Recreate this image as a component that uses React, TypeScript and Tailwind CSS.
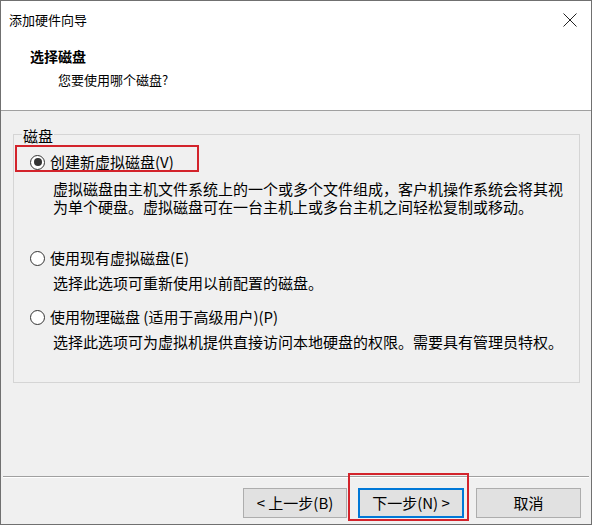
import React from "react";

const FONT = "font-['Noto_Sans_CJK_SC','Noto_Sans',sans-serif]";

const Radio: React.FC<{ checked?: boolean }> = ({ checked }) => (
  <span className="flex h-[15px] w-[15px] shrink-0 items-center justify-center rounded-full border border-[#333333] bg-white">
    {checked && <span className="h-[8px] w-[8px] rounded-full bg-[#333333]" />}
  </span>
);

const Option: React.FC<{
  label: string;
  checked?: boolean;
  highlight?: boolean;
  className?: string;
}> = ({ label, checked, highlight, className }) => (
  <div className={`relative flex h-[20px] items-center gap-[5px] ${className ?? ""}`}>
    <Radio checked={checked} />
    <span className="text-[15px] leading-[20px] text-black whitespace-nowrap">{label}</span>
    {highlight && (
      <span className="pointer-events-none absolute left-[-15px] top-[-7px] h-[27px] w-[184px] border-2 border-[#d3232b]" />
    )}
  </div>
);

const Desc: React.FC<{ lines: string[]; className?: string }> = ({ lines, className }) => (
  <div className={`pl-[23px] text-[15px] text-black whitespace-nowrap ${className ?? ""}`}>
    {lines.map((l) => (
      <div key={l} className="h-[18px] leading-[18px]">
        {l}
      </div>
    ))}
  </div>
);

export default function App() {
  return (
    <div className={`${FONT} flex h-[525px] w-[592px] flex-col border border-[#707070] bg-[#f0f0f0]`}>
      {/* title + header */}
      <div className="h-[110px] shrink-0 border-b border-[#a0a0a0] bg-white">
        <div className="flex h-[38px] items-center justify-between pl-[8px] pr-[14px]">
          <span className="text-[13px] leading-[20px] text-black">添加硬件向导</span>
          <svg width="14" height="14" viewBox="0 0 14 14" className="text-[#222]">
            <path d="M0.5 0.5 L13.5 13.5 M13.5 0.5 L0.5 13.5" stroke="currentColor" strokeWidth="1" fill="none" />
          </svg>
        </div>
        <div className="pt-[7px]">
          <div className="pl-[29px] text-[14px] font-bold leading-[20px] text-black">选择磁盘</div>
          <div className="mt-[4px] pl-[57px] text-[13px] leading-[20px] text-black">您要使用哪个磁盘?</div>
        </div>
      </div>

      {/* body */}
      <div className="flex flex-1 flex-col">
        <div className="pl-[12px] pr-[11px] pt-[23px]">
          {/* group box */}
          <div className="h-[249px] border border-[#d5d5d5]">
            <div className="-mt-[9px] ml-[8px] w-fit bg-[#f0f0f0] px-[1px] text-[15px] leading-[20px] text-black">
              磁盘
            </div>

            <div className="pl-[16px] pt-[6px]">
              <Option label="创建新虚拟磁盘(V)" checked highlight />
              <Desc
                className="mt-[8px]"
                lines={[
                  "虚拟磁盘由主机文件系统上的一个或多个文件组成，客户机操作系统会将其视",
                  "为单个硬盘。虚拟磁盘可在一台主机上或多台主机之间轻松复制或移动。",
                ]}
              />

              <Option label="使用现有虚拟磁盘(E)" className="mt-[32px]" />
              <Desc className="mt-[6px]" lines={["选择此选项可重新使用以前配置的磁盘。"]} />

              <Option label="使用物理磁盘 (适用于高级用户)(P)" className="mt-[15px]" />
              <Desc
                className="mt-[6px]"
                lines={["选择此选项可为虚拟机提供直接访问本地硬盘的权限。需要具有管理员特权。"]}
              />
            </div>
          </div>
        </div>

        <div className="mt-[93px] mx-[2px] h-[2px] border-t border-[#a0a0a0] border-b-white border-b" />

        <div className="flex justify-end gap-[11px] pr-[10px] pt-[10px]">
          <button className="h-[30px] w-[104px] border border-[#adadad] bg-[#e1e1e1] text-[15px] text-black">
            &lt; 上一步(B)
          </button>
          <div className="relative">
            <button className="h-[30px] w-[106px] border-2 border-[#0078d7] bg-[#e1e1e1] text-[15px] text-black">
              下一步(N) &gt;
            </button>
            <span className="pointer-events-none absolute left-[-10px] top-[-15px] h-[48px] w-[121px] border-2 border-[#d3232b]" />
          </div>
          <button className="ml-[1px] h-[30px] w-[105px] border border-[#adadad] bg-[#e1e1e1] text-[15px] text-black">
            取消
          </button>
        </div>
      </div>
    </div>
  );
}
